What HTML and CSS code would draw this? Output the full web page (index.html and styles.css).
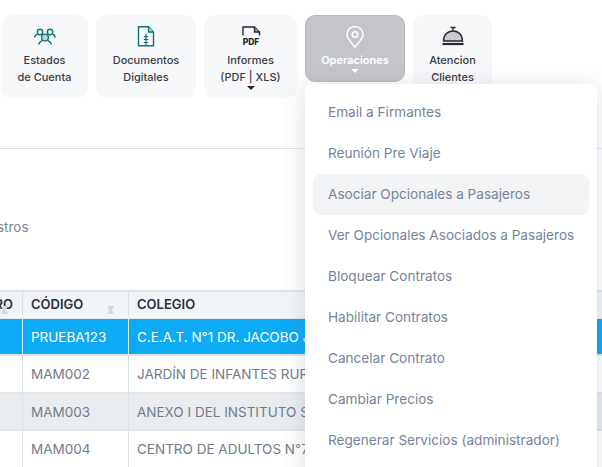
FILE: index.html
```html
<!DOCTYPE html>
<html lang="es">
<head>
<meta charset="utf-8">
<title>Operaciones</title>
<link rel="stylesheet" href="styles.css">
</head>
<body>
<div class="page">
  <nav class="toolbar">
    <a class="tool tool-estados">
      <svg class="icon" width="24" height="24" viewBox="0 0 24 24" fill="none" stroke="#0f766e" stroke-width="1.400"><circle cx="7" cy="7" r="2.700"/><circle cx="17" cy="7" r="2.700"/><circle cx="12" cy="12.500" r="3.400" fill="#b9d6d2"/><path d="M1.500 12.500c.5-1.800 1.500-2.800 3-3.200M22.500 12.500c-.5-1.800-1.500-2.800-3-3.200M5.500 19.500c.5-1.800 2-3.300 3.800-4.200M18.500 19.500c-.5-1.800-2-3.300-3.800-4.200"/></svg>
      <span>Estados<br>de Cuenta</span>
    </a>
    <a class="tool tool-docs">
      <svg class="icon" width="24" height="24" viewBox="0 0 24 24" fill="none" stroke="#0f766e" stroke-width="1.400"><path d="M4.500 1.700h10l5 5.300v13.800h-15z"/><path d="M14.500 1.700v5.300h5" fill="#b9d6d2"/><path d="M12 8.500v12M9.800 11.500h4.400M9.800 14.500h4.400M9.800 17.500h4.400" stroke-width="1.200"/></svg>
      <span>Documentos<br>Digitales</span>
    </a>
    <a class="tool tool-informes">
      <svg class="icon" width="24" height="24" viewBox="0 0 24 24" fill="none" stroke="#27272f" stroke-width="1.400"><path d="M4 10.500V2h11.500l5 5v3.500"/><path d="M15.500 2v5h5" fill="#9a9ca3"/><text x="12" y="20" class="pdf-text">PDF</text></svg>
      <span>Informes<br>(PDF | XLS)</span>
      <i class="caret caret-dark"></i>
    </a>
    <a class="tool tool-oper">
      <svg class="icon" width="24" height="24" viewBox="0 0 24 24" fill="none" stroke="#fff" stroke-width="1.500"><path d="M12 22C8.500 17.500 4 14 4 9.500a8 8 0 0 1 16 0C20 14 15.500 17.500 12 22z"/><circle cx="12" cy="9.500" r="2.800"/></svg>
      <span>Operaciones</span>
      <i class="caret caret-light"></i>
    </a>
    <a class="tool tool-atencion">
      <svg class="icon" width="24" height="24" viewBox="0 0 24 24" fill="none" stroke="#27272f" stroke-width="1.400"><path d="M9.500 2.500h5M12 2.500v3"/><path d="M2.500 16c0-6 4-10 9.500-10s9.500 4 9.500 10z" fill="#c9cbd0"/><path d="M1.500 19h21" stroke-width="2.200"/></svg>
      <span>Atencion<br>Clientes</span>
    </a>
  </nav>
  <hr class="rule">
  <p class="count">Mostrando registros</p>
  <div class="table">
    <div class="row head">
      <div class="cell cell-nro">NRO<i class="sort"></i></div>
      <div class="cell cell-cod">CÓDIGO<i class="sort"></i></div>
      <div class="cell cell-col">COLEGIO</div>
    </div>
    <div class="row sel">
      <div class="cell cell-nro"></div>
      <div class="cell cell-cod">PRUEBA123</div>
      <div class="cell cell-col">C.E.A.T. N°1 DR. JACOBO JEAN</div>
    </div>
    <div class="row">
      <div class="cell cell-nro"></div>
      <div class="cell cell-cod">MAM002</div>
      <div class="cell cell-col">JARDÍN DE INFANTES RURAL</div>
    </div>
    <div class="row alt">
      <div class="cell cell-nro"></div>
      <div class="cell cell-cod">MAM003</div>
      <div class="cell cell-col">ANEXO I DEL INSTITUTO SUPERIOR</div>
    </div>
    <div class="row">
      <div class="cell cell-nro"></div>
      <div class="cell cell-cod">MAM004</div>
      <div class="cell cell-col">CENTRO DE ADULTOS N°7</div>
    </div>
  </div>
  <ul class="menu">
    <li>Email a Firmantes</li>
    <li>Reunión Pre Viaje</li>
    <li class="active">Asociar Opcionales a Pasajeros</li>
    <li>Ver Opcionales Asociados a Pasajeros</li>
    <li>Bloquear Contratos</li>
    <li>Habilitar Contratos</li>
    <li>Cancelar Contrato</li>
    <li>Cambiar Precios</li>
    <li>Regenerar Servicios (administrador)</li>
  </ul>
</div>
</body>
</html>
```
FILE: styles.css
```css
* { box-sizing: border-box; }
html, body { margin: 0; padding: 0; background: #fff; }
.page {
  position: relative;
  width: 602px;
  height: 467px;
  overflow: hidden;
  font-family: "Inter", "Liberation Sans", sans-serif;
}
.toolbar {
  display: flex;
  align-items: flex-start;
  gap: 8px;
  padding: 15px 0 0 1px;
  height: 148px;
}
.tool {
  display: flex;
  flex-direction: column;
  align-items: center;
  position: relative;
  height: 83px;
  padding-top: 10px;
  border-radius: 10px;
  background: #f7f8fa;
  color: #383c47;
  font-size: 11px;
  line-height: 17px;
  text-align: center;
  font-weight: 500;
}
.tool .icon { margin-bottom: 3px; flex: none; }
.tool-estados { width: 87px; }
.tool-docs { width: 100px; }
.tool-informes { width: 93px; }
.tool-oper {
  width: 100px;
  height: 67px;
  background: #c4c5c8;
  color: #fff;
  border: 1px solid #b8b9bc;
  padding-top: 9px;
  font-weight: 600;
}
.tool-atencion { width: 79px; }
.pdf-text {
  font: 800 8.500px "Inter", "Liberation Sans", sans-serif;
  text-anchor: middle;
  fill: #27272f;
  stroke: none;
}
.caret {
  position: absolute;
  left: 50%;
  margin-left: -4px;
  width: 0;
  height: 0;
  border-left: 4px solid transparent;
  border-right: 4px solid transparent;
  border-top: 4px solid #27272f;
}
.caret-dark { top: 71px; margin-left: -3.500px; }
.caret-light { top: 53px; border-top-color: #fff; }
.rule {
  margin: 0;
  border: 0;
  border-top: 1px solid #dfe2e7;
}
.count {
  margin: 70px 0 0 -100px;
  height: 71px;
  font-size: 13.500px;
  line-height: 17px;
  color: #7c8592;
  white-space: nowrap;
}
.table {
  width: 700px;
  margin-left: -41px;
  border-top: 2px solid #dee2e6;
  font-size: 13.500px;
}
.row {
  display: grid;
  grid-template-columns: 64px 106px 1fr;
  height: 38px;
  border-bottom: 2px solid #e1e5ea;
  color: #727b87;
}
.row.head {
  height: 27px;
  background: #f2f5f8;
  color: #2b2f3a;
  font-size: 13px;
  font-weight: 600;
  padding-bottom: 2px;
  border-bottom: 1px solid #e1e5ea;
}
.row.sel {
  height: 37px;
  background: #0dabf4;
  color: #fff;
}
.row.alt { height: 37px; background: #e9ecef; }
.cell {
  position: relative;
  display: flex;
  align-items: center;
  padding-left: 8px;
  border-right: 1.500px solid #dbe0e6;
  white-space: nowrap;
  overflow: hidden;
}
.sel .cell { border-right-color: #d8eefa; }
.cell-col { border-right: 0; }
.cell-nro { justify-content: flex-end; padding-right: 9px; }
.sort {
  position: absolute;
  right: 14px;
  bottom: 2px;
  width: 7px;
  height: 8px;
  background: #d5d8dc;
  clip-path: polygon(0 0, 100% 0, 70% 50%, 100% 100%, 0 100%, 30% 50%);
}
.menu {
  position: absolute;
  left: 305px;
  top: 84px;
  width: 292px;
  height: 400px;
  margin: 0;
  padding: 8px;
  list-style: none;
  background: #fff;
  border-radius: 8px;
  box-shadow: 0 4px 24px rgba(60, 70, 110, .18);
  font-size: 13.600px;
  color: #76849a;
}
.menu li {
  height: 41px;
  line-height: 40px;
  padding-left: 15px;
  border-radius: 8px;
  white-space: nowrap;
}
.menu li.active { background: #f3f4f6; }
```
